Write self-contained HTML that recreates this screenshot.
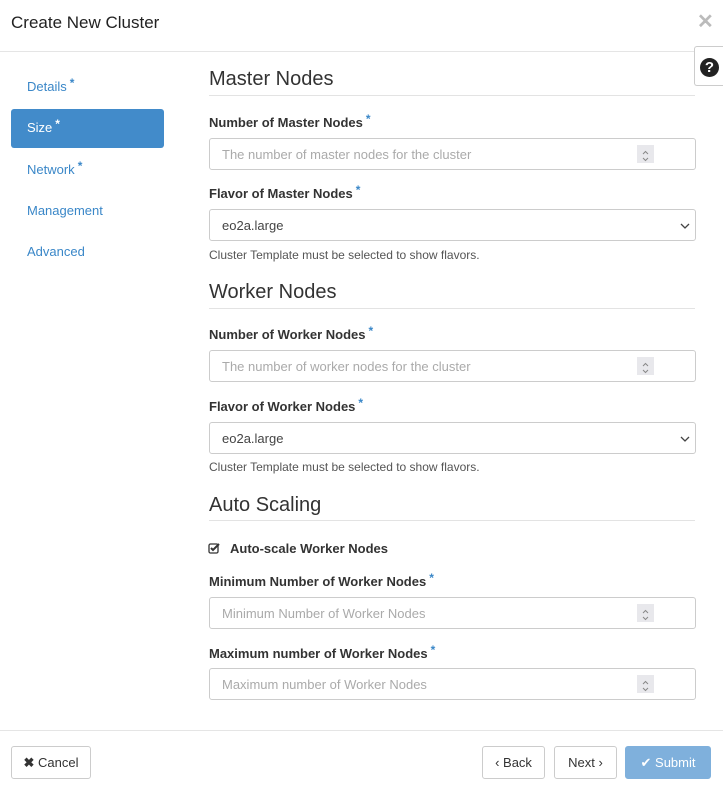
<!DOCTYPE html>
<html><head><style>
*{box-sizing:border-box;margin:0;padding:0}
body{width:723px;height:790px;background:#fff;font-family:"Liberation Sans",sans-serif;color:#333;position:relative;overflow:hidden}
.a{position:absolute}
.title{left:11px;top:13px;font-size:17px;color:#222}
.nav{left:27px;font-size:13px;color:#3a87c8}
.star{color:#3a87c8;font-size:12px;position:relative;top:-4px;margin-left:3px;font-weight:bold}
h3{position:absolute;left:209px;font-size:20px;font-weight:normal;color:#333}
.hr{position:absolute;left:209px;width:486px;height:1px;background:#e3e3e3}
.lbl{position:absolute;left:209px;font-size:13px;font-weight:bold;color:#333}
.inp{position:absolute;left:209px;width:487px;height:32px;border:1px solid #ccc;border-radius:3px;font-size:13px;color:#aaa;padding:0 12px;line-height:31px}
.sp{position:absolute;right:41px;top:6px;width:17px;height:18px;background:#e8e8ec;color:#888}
.sel{color:#444}
.help{position:absolute;left:209px;font-size:12px;color:#555}
.btn{position:absolute;top:746px;height:33px;border:1px solid #ccc;border-radius:3px;font-size:13px;line-height:31px;text-align:center;color:#333;background:#fff}
</style></head><body>
<div class="a title">Create New Cluster</div>
<div class="a" style="left:697px;top:9px;font-size:20px;color:#bbb;font-weight:bold">✕</div>
<div class="a" style="left:0;top:51px;width:723px;height:1px;background:#e5e5e5"></div>
<div class="a" style="left:694px;top:46px;width:30px;height:40px;border:1px solid #ccc;border-right:none;border-radius:3px 0 0 3px;background:#fff"></div>
<div class="a" style="left:700px;top:58px;width:19px;height:19px;border-radius:50%;background:#222;color:#fff;font-weight:bold;font-size:15px;text-align:center;line-height:19px">?</div>

<div class="a nav" style="top:79px">Details<span class="star">*</span></div>
<div class="a" style="left:11px;top:109px;width:153px;height:39px;background:#428bca;border-radius:3px"></div>
<div class="a nav" style="top:120px;color:#fff">Size<span class="star" style="color:#fff">*</span></div>
<div class="a nav" style="top:162px">Network<span class="star">*</span></div>
<div class="a nav" style="top:203px">Management</div>
<div class="a nav" style="top:244px">Advanced</div>

<h3 style="top:68px">Master Nodes</h3><div class="hr" style="top:95px"></div>
<div class="lbl" style="top:115px">Number of Master Nodes<span class="star">*</span></div>
<div class="inp" style="top:138px">The number of master nodes for the cluster<div class="sp"><svg width="17" height="18"><path d="M6 7l2.5-2.5L11 7M6 11l2.5 2.5L11 11" fill="none" stroke="#888" stroke-width="1"/></svg></div></div>
<div class="lbl" style="top:186px">Flavor of Master Nodes<span class="star">*</span></div>
<div class="inp sel" style="top:209px">eo2a.large<svg style="position:absolute;right:5px;top:12px" width="10" height="8"><path d="M1 2l4 4 4-4" fill="none" stroke="#444" stroke-width="1.3"/></svg></div>
<div class="help" style="top:248px">Cluster Template must be selected to show flavors.</div>

<h3 style="top:281px">Worker Nodes</h3><div class="hr" style="top:308px"></div>
<div class="lbl" style="top:327px">Number of Worker Nodes<span class="star">*</span></div>
<div class="inp" style="top:350px">The number of worker nodes for the cluster<div class="sp"><svg width="17" height="18"><path d="M6 7l2.5-2.5L11 7M6 11l2.5 2.5L11 11" fill="none" stroke="#888" stroke-width="1"/></svg></div></div>
<div class="lbl" style="top:399px">Flavor of Worker Nodes<span class="star">*</span></div>
<div class="inp sel" style="top:422px">eo2a.large<svg style="position:absolute;right:5px;top:12px" width="10" height="8"><path d="M1 2l4 4 4-4" fill="none" stroke="#444" stroke-width="1.3"/></svg></div>
<div class="help" style="top:460px">Cluster Template must be selected to show flavors.</div>

<h3 style="top:494px">Auto Scaling</h3><div class="hr" style="top:520px"></div>
<svg class="a" style="left:208px;top:542px" width="13" height="13"><rect x="1" y="2" width="9" height="9" rx="1.5" fill="none" stroke="#333" stroke-width="1.3"/><path d="M3 6l2 2 6-6" fill="none" stroke="#333" stroke-width="2"/></svg>
<div class="lbl" style="left:230px;top:541px">Auto-scale Worker Nodes</div>
<div class="lbl" style="top:574px">Minimum Number of Worker Nodes<span class="star">*</span></div>
<div class="inp" style="top:597px">Minimum Number of Worker Nodes<div class="sp"><svg width="17" height="18"><path d="M6 7l2.5-2.5L11 7M6 11l2.5 2.5L11 11" fill="none" stroke="#888" stroke-width="1"/></svg></div></div>
<div class="lbl" style="top:646px">Maximum number of Worker Nodes<span class="star">*</span></div>
<div class="inp" style="top:668px">Maximum number of Worker Nodes<div class="sp"><svg width="17" height="18"><path d="M6 7l2.5-2.5L11 7M6 11l2.5 2.5L11 11" fill="none" stroke="#888" stroke-width="1"/></svg></div></div>

<div class="a" style="left:0;top:730px;width:723px;height:1px;background:#e5e5e5"></div>
<div class="btn" style="left:11px;width:80px"><b>✖</b> Cancel</div>
<div class="btn" style="left:482px;width:63px">‹ Back</div>
<div class="btn" style="left:554px;width:63px">Next ›</div>
<div class="btn" style="left:625px;width:86px;background:#7fb0dc;border-color:#7fb0dc;color:#fff">✔ Submit</div>
</body></html>
